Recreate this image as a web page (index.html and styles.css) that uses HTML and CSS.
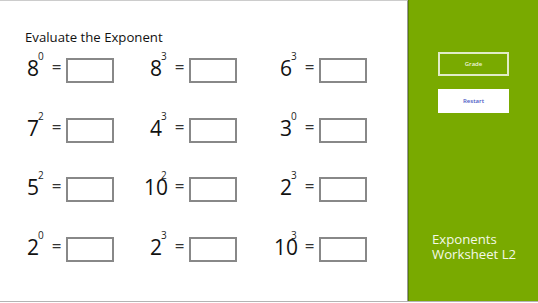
FILE: index.html
```html
<!DOCTYPE html>
<html>
<head>
<meta charset="utf-8">
<link rel="stylesheet" href="styles.css">
</head>
<body>
<div class="page">
  <main class="main">
    <h1 class="title">Evaluate the Exponent</h1>
    <div class="grid">
      <div class="cell"><span class="num">8<sup class="sup">0</sup></span><span class="eq">=</span><span class="box"></span></div>
      <div class="cell"><span class="num">8<sup class="sup">3</sup></span><span class="eq">=</span><span class="box"></span></div>
      <div class="cell"><span class="num">6<sup class="sup">3</sup></span><span class="eq">=</span><span class="box"></span></div>
      <div class="cell"><span class="num">7<sup class="sup">2</sup></span><span class="eq">=</span><span class="box"></span></div>
      <div class="cell"><span class="num">4<sup class="sup">3</sup></span><span class="eq">=</span><span class="box"></span></div>
      <div class="cell"><span class="num">3<sup class="sup">0</sup></span><span class="eq">=</span><span class="box"></span></div>
      <div class="cell"><span class="num">5<sup class="sup">2</sup></span><span class="eq">=</span><span class="box"></span></div>
      <div class="cell"><span class="num">10<sup class="sup">2</sup></span><span class="eq">=</span><span class="box"></span></div>
      <div class="cell"><span class="num">2<sup class="sup">3</sup></span><span class="eq">=</span><span class="box"></span></div>
      <div class="cell"><span class="num">2<sup class="sup">0</sup></span><span class="eq">=</span><span class="box"></span></div>
      <div class="cell"><span class="num">2<sup class="sup">3</sup></span><span class="eq">=</span><span class="box"></span></div>
      <div class="cell"><span class="num">10<sup class="sup">3</sup></span><span class="eq">=</span><span class="box"></span></div>
    </div>
  </main>
  <aside class="side">
    <button class="btn btn-grade">Grade</button>
    <button class="btn btn-restart">Restart</button>
    <div class="side-title">Exponents<br>Worksheet L2</div>
  </aside>
</div>
</body>
</html>
```
FILE: styles.css
```css
html, body {
  margin: 0;
  padding: 0;
  background: #ffffff;
}
body {
  width: 538px;
  height: 303px;
  overflow: hidden;
  font-family: "Open Sans", "Noto Sans", sans-serif;
}
.page {
  display: flex;
  height: 302px;
  box-sizing: border-box;
  border-bottom: 1px solid #b4b4b4;
}
.main {
  width: 408px;
  box-sizing: border-box;
  border-top: 1px solid #cccccc;
  border-right: 1px solid #9a9a9a;
  padding-left: 21px;
}
.title {
  margin: 26px 0 0 4px;
  font-size: 13.2px;
  line-height: 20px;
  font-weight: 400;
  color: #111111;
}
.grid {
  margin-top: 11px;
  display: grid;
  grid-template-columns: 123px 130px auto;
  grid-auto-rows: 25px;
  row-gap: 34.67px;
}
.cell {
  display: flex;
  align-items: flex-start;
  height: 25px;
}
.num {
  position: relative;
  width: 24px;
  text-align: center;
  font-size: 21px;
  line-height: 20px;
  color: #111111;
}
.sup {
  position: absolute;
  left: 17px;
  top: -7px;
  font-size: 10px;
  line-height: 10px;
  vertical-align: baseline;
  color: #222222;
}
.eq {
  width: 11px;
  margin-left: 6px;
  margin-right: 4px;
  text-align: center;
  font-size: 17px;
  line-height: 17px;
  color: #333333;
}
.box {
  width: 48px;
  height: 25px;
  box-sizing: border-box;
  border: 2px solid #888888;
  background: #ffffff;
}
.side {
  flex: 1;
  background: #79aa00;
  border-left: 1px solid #5a8400;
  display: flex;
  flex-direction: column;
  align-items: flex-start;
  padding-top: 52px;
}
.btn {
  margin-left: 29px;
  width: 71px;
  height: 24px;
  box-sizing: border-box;
  font-family: "Open Sans", "Noto Sans", sans-serif;
  font-size: 6px;
  font-weight: 600;
  padding: 0;
}
.btn-grade {
  background: transparent;
  border: 2px solid rgba(255, 255, 255, 0.78);
  color: #eef6dc;
}
.btn-restart {
  margin-top: 13px;
  background: #ffffff;
  border: none;
  color: #4b58c4;
}
.side-title {
  margin: 119px 0 0 23px;
  font-size: 13.2px;
  line-height: 15px;
  color: #f4f9e8;
}
```
